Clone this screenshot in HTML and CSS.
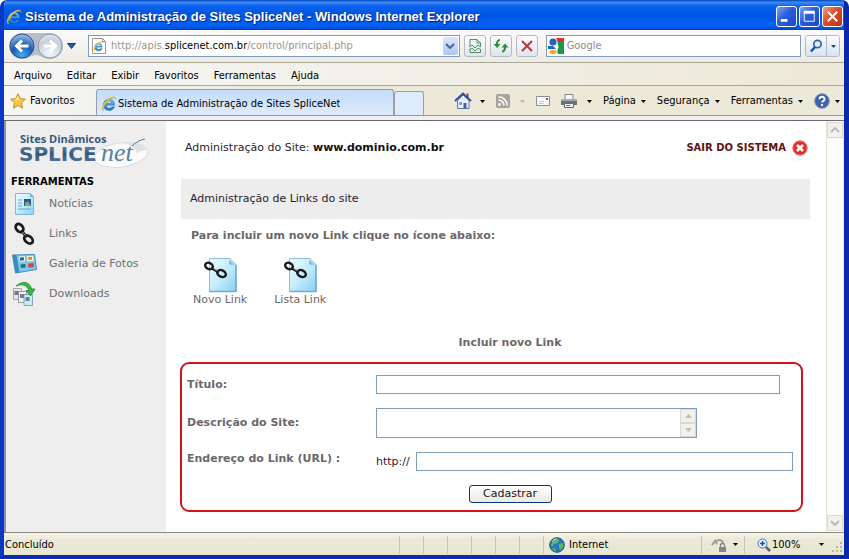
FILE: index.html
```html
<!DOCTYPE html>
<html lang="pt-BR">
<head>
<meta charset="utf-8">
<title>Sistema de Administração de Sites SpliceNet</title>
<link rel="stylesheet" href="styles.css">
</head>
<body>
<svg class="defs" aria-hidden="true">
  <defs>
    <linearGradient id="eBlue" x1="0" y1="0" x2="0" y2="1"><stop offset="0" stop-color="#6cccfa"/><stop offset="1" stop-color="#1672cc"/></linearGradient>
    <radialGradient id="ballBlue" cx=".5" cy=".9" r=".9"><stop offset="0" stop-color="#3fb0f0"/><stop offset=".5" stop-color="#1c5cb0"/><stop offset="1" stop-color="#9cc2ea"/></radialGradient>
    <radialGradient id="ballGrey" cx=".5" cy=".8" r=".9"><stop offset="0" stop-color="#f4f7fb"/><stop offset=".6" stop-color="#c6d0dc"/><stop offset="1" stop-color="#eef2f6"/></radialGradient>
    <linearGradient id="paper" x1="0" y1="0" x2="1" y2="1"><stop offset="0" stop-color="#f2fbff"/><stop offset=".5" stop-color="#c4ecfb"/><stop offset="1" stop-color="#86d2f2"/></linearGradient>
    <linearGradient id="steel" x1="0" y1="0" x2="0" y2="1"><stop offset="0" stop-color="#6f94bb"/><stop offset=".5" stop-color="#34597f"/><stop offset="1" stop-color="#5681ac"/></linearGradient>
    <symbol id="ie" viewBox="0 0 16 16">
      <path d="M13.6 9.2H5.4c.1 2 1.300 3 2.900 3 1.100 0 1.900-.5 2.400-1.400h2.800c-.8 2.300-2.700 3.700-5.300 3.700-3.400 0-5.800-2.200-5.800-5.700S4.900 3.100 8.200 3.100s5.500 2.400 5.400 6.100zM5.500 7.200h5.300c-.2-1.300-1.100-2.100-2.500-2.100s-2.500.8-2.800 2.100z" fill="url(#eBlue)" stroke="#1257a5" stroke-width=".4"/>
      <path d="M2.600 14.900C-1 13.600 2.200 6.800 7.200 3.200 11 .4 15.400-.2 14.800 3.600c.2-2.600-3-2-6.300.3C4.200 7 .9 12.600 2.600 14.900z" fill="#f3bf3d" stroke="#d9a83a" stroke-width=".5"/>
    </symbol>
    <symbol id="linkpage" viewBox="0 0 34 36">
      <path d="M6.500 1.500H27l6 6v27H6.500z" fill="url(#paper)" stroke="#8fbbe0"/>
      <path d="M6.500 34.500H33V8" fill="none" stroke="#7ba6d2" stroke-width="1.500"/>
      <path d="M26 3l6 5-6-.5z" fill="#6fc4ea"/>
      <g fill="none" stroke="#15181c" stroke-width="2.400"><ellipse cx="6" cy="9" rx="4" ry="3" transform="rotate(25 6 9)"/><ellipse cx="18.500" cy="16.500" rx="4.500" ry="3.200" transform="rotate(25 18.500 16.500)"/><path d="M8 11l8 4.500"/></g>
      <path d="M10.500 11.500l4 2.300" stroke="#9aa4ac"/>
    </symbol>
    <symbol id="down" viewBox="0 0 7 4"><path d="M0 0h7L3.500 4z"/></symbol>
    <symbol id="chev" viewBox="0 0 10 6"><path d="M1 1l4 4 4-4" fill="none" stroke="currentColor" stroke-width="2"/></symbol>
  </defs>
</svg>
<div class="window">
  <header class="titlebar">
    <svg class="i16" viewBox="0 0 16 16"><use href="#ie"/></svg>
    <h1>Sistema de Administração de Sites SpliceNet - Windows Internet Explorer</h1>
    <div class="winbtns">
      <button type="button" aria-label="Minimizar"><svg viewBox="0 0 20 20"><path d="M4 14h7" stroke="#fff" stroke-width="3"/></svg></button>
      <button type="button" aria-label="Maximizar"><svg viewBox="0 0 20 20"><path d="M4.500 5v10h10.500V5z" fill="none" stroke="#fff"/><path d="M4 5.500h11.500" stroke="#fff" stroke-width="3"/></svg></button>
      <button type="button" class="close" aria-label="Fechar"><svg viewBox="0 0 20 20"><path d="M5 5l10 10M15 5L5 15" stroke="#fff" stroke-width="2.200"/></svg></button>
    </div>
  </header>

  <div class="chrome">
    <div class="addressrow">
      <div class="nav">
        <svg class="travel" viewBox="0 0 56 28" role="img" aria-label="Voltar e avançar">
          <path d="M14 1h28a13 13 0 0 1 0 26c-7 0-9-4-14-4s-7 4-14 4A13 13 0 0 1 14 1z" fill="#b7bec9"/>
          <circle cx="14" cy="14" r="12" fill="url(#ballBlue)" stroke="#2a4f86"/>
          <circle cx="42" cy="14" r="12" fill="url(#ballGrey)" stroke="#8d99aa"/>
          <path d="M20.500 14H9M14 8.500L8.500 14l5.500 5.500" fill="none" stroke="#fff" stroke-width="3"/>
          <path d="M35.500 14H47M42 8.500l5.500 5.500-5.500 5.500" fill="none" stroke="#fff" stroke-width="3"/>
        </svg>
        <svg class="navdown" viewBox="0 0 9 6"><path d="M.5.500h8L4.500 5.500z" fill="#1d5fa0" stroke="#173d73"/></svg>
      </div>
      <div class="address">
        <svg class="i18" viewBox="0 0 18 18"><path d="M2.500 1.500h10l3 3v12h-13z" fill="#fff" stroke="#999"/><path d="M12.500 1.500v3h3" fill="none" stroke="#999"/><use href="#ie" x="3" y="4" width="11" height="11"/></svg>
        <span class="url">http://apis.<b>splicenet.com.br</b>/control/principal.php</span>
        <button type="button" class="combo" aria-label="Histórico"><svg viewBox="0 0 10 6"><use href="#chev"/></svg></button>
      </div>
      <button type="button" class="tool" aria-label="Modo de compatibilidade"><svg viewBox="0 0 18 18"><path d="M4 9V2.500h7L14.500 6v3M4 12v3.500h10.500V12" fill="none" stroke="#4a9558"/><path d="M11 2.500V6h3.500M3 10l3-2 3 3 3-3 3 2M3 13l3-2 3 3 3-3 3 2" fill="none" stroke="#4a9558"/></svg></button>
      <button type="button" class="tool" aria-label="Atualizar"><svg viewBox="0 0 18 18"><path d="M8 3C5.500 3 5 4.500 5 8M10 14.500c2.500 0 3-1.500 3-5" fill="none" stroke="#28923a" stroke-width="2.200"/><path d="M1.500 7h7L5 11zM9.500 10.500h7L13 6.500z" fill="#28923a"/></svg></button>
      <button type="button" class="tool" aria-label="Parar"><svg viewBox="0 0 18 18"><path d="M4 4l10 10M14 4L4 14" stroke="#b8363c" stroke-width="2"/></svg></button>
      <div class="searchbox">
        <svg class="i18" viewBox="0 0 18 18"><path d="M1 1h16v16H1z" fill="#f6f6f6"/><path d="M10 1h7v16h-6c-2-5 2-6 0-9z" fill="#169a46"/><path d="M9 1h8v4h-6z" fill="#db3025"/><circle cx="6" cy="5" r="3.500" fill="#2461c2"/><path d="M1 9h5l3 3H1z" fill="#2461c2"/><ellipse cx="6" cy="15" rx="3.500" ry="2" fill="#f4a81d"/></svg>
        <input type="text" placeholder="Google" aria-label="Pesquisar no Google">
      </div>
      <div class="searchbtn">
        <button type="button" aria-label="Pesquisar"><svg class="i14" viewBox="0 0 14 14"><circle cx="8.500" cy="5" r="3.700" fill="#d9edff" stroke="#2f63b5" stroke-width="1.700"/><path d="M6 8l-4 4.500" stroke="#1f4a9c" stroke-width="2.500"/></svg></button>
        <button type="button" aria-label="Opções de pesquisa"><svg class="dd blue" viewBox="0 0 7 4"><use href="#down"/></svg></button>
      </div>
    </div>

    <nav class="menubar">
      <a href="#">Arquivo</a><a href="#">Editar</a><a href="#">Exibir</a><a href="#">Favoritos</a><a href="#">Ferramentas</a><a href="#">Ajuda</a>
    </nav>

    <div class="tabrow">
      <a class="favorites" href="#"><svg class="i16" viewBox="0 0 16 16"><path d="M8 .8l2.200 4.900 5.200.5-3.900 3.600 1.100 5.300L8 12.400l-4.600 2.700 1.100-5.300L.6 6.200l5.200-.5z" fill="#f9c843" stroke="#c98a1c"/><path d="M8 3l1.300 3.700L5 7z" fill="#fff0b0"/></svg>Favoritos</a>
      <a class="tab" href="#"><svg class="i16" viewBox="0 0 16 16"><use href="#ie"/></svg><span>Sistema de Administração de Sites SpliceNet</span></a>
      <button type="button" class="newtab" aria-label="Nova guia"></button>
      <div class="commands">
        <a href="#" aria-label="Página inicial"><svg class="i18" viewBox="0 0 18 18"><path d="M12.500 1.500h2V6h-2z" fill="#a33c2c"/><path d="M3.500 8.500L9 3l6 5.500v8h-11.500z" fill="#e8effa" stroke="#5a79ac"/><path d="M1 9l8-7.500L17 9" fill="none" stroke="#2f519c" stroke-width="2"/><path d="M9.500 11h3v5.500h-3z" fill="#40629f"/><path d="M5 10h3v3H5z" fill="#7da2d6"/></svg><svg class="dd" viewBox="0 0 7 4"><use href="#down"/></svg></a>
        <a href="#" class="off" aria-label="Feeds"><svg class="i14" viewBox="0 0 14 14"><rect width="14" height="14" rx="2" fill="#a5a5a0"/><circle cx="3.500" cy="10.500" r="1.500" fill="#fff"/><path d="M2.500 6a5.500 5.500 0 0 1 5.500 5.500M2.500 2.800a8.700 8.700 0 0 1 8.700 8.700" fill="none" stroke="#fff" stroke-width="1.600"/></svg><svg class="dd" viewBox="0 0 7 4"><use href="#down"/></svg></a>
        <a href="#" aria-label="Ler email"><svg class="i14" viewBox="0 0 14 14"><path d="M.5 2.500h13v9H.5z" fill="#fafafa" stroke="#8b8d98"/><path d="M10 4h2v2h-2z" fill="#d02e3c"/><path d="M3 7.500h5M3 9.500h5" stroke="#c4c7d0"/></svg></a>
        <a href="#" aria-label="Imprimir"><svg class="i16" viewBox="0 0 16 16"><path d="M4 1.500h8V7H4z" fill="#f6f9fd" stroke="#788"/><path d="M0 6h16v6H0z" fill="#6d7178"/><path d="M0 6h16v2H0z" fill="#a6abb2"/><path d="M3.500 10.500h9v4h-9z" fill="#f4f7fa" stroke="#667"/><path d="M5 12.500h4" stroke="#2d7fd0"/></svg><svg class="dd wide" viewBox="0 0 7 4"><use href="#down"/></svg></a>
        <a href="#">Página<svg class="dd" viewBox="0 0 7 4"><use href="#down"/></svg></a>
        <a href="#">Segurança<svg class="dd" viewBox="0 0 7 4"><use href="#down"/></svg></a>
        <a href="#">Ferramentas<svg class="dd" viewBox="0 0 7 4"><use href="#down"/></svg></a>
        <a href="#" class="help" aria-label="Ajuda"><svg class="i16" viewBox="0 0 16 16"><circle cx="8" cy="8" r="7.300" fill="#3a62b0" stroke="#8893a8"/><path d="M5.500 6.200C5.500 3 10.700 3 10.600 6.200c0 1.800-2.500 1.600-2.500 3.400M8.100 11v2" fill="none" stroke="#fff" stroke-width="1.900"/></svg><svg class="dd" viewBox="0 0 7 4"><use href="#down"/></svg></a>
      </div>
    </div>
  </div>

  <div class="viewport">
    <aside class="sidebar">
      <svg class="logo" viewBox="0 -4 136 40" role="img" aria-label="Sites Dinâmicos SpliceNet">
        <ellipse cx="106" cy="22" rx="27" ry="12" transform="rotate(-8 106 22)" fill="#fbfbfb" stroke="#dcdcdc"/>
        <path d="M108 10c9-2 20 1 24 7-3 1-8 0-10 4-1-6-7-10-14-11z" fill="#dde1e6"/>
        <text class="logo-top" x="5" y="10">Sites Dinâmicos</text>
        <text class="logo-main" x="4" y="28">SPLICE</text>
        <text class="logo-net" x="86" y="28">net</text>
        <path d="M117 13c4-4 8-6 13-7" fill="none" stroke="#56809f"/>
      </svg>
      <h2>FERRAMENTAS</h2>
      <ul>
        <li><a href="#"><svg class="i26" viewBox="0 0 26 26"><path d="M4.500 2.500h15l3 3v18h-18z" fill="url(#paper)" stroke="#84b6dc"/><path d="M19 2.500l4 4-4-.5z" fill="#5cbbe8"/><path d="M13 8h7v7h-7z" fill="#2d568c"/><path d="M14 12l3-2 3 5h-6z" fill="#80a860"/><path d="M7 9h4M7 12h4M7 15h4M7 18h13" stroke="#6aa4d8"/></svg>Notícias</a></li>
        <li><a href="#"><svg class="i26" viewBox="0 0 26 26"><g fill="none" stroke="#1a1a1a" stroke-width="2.800"><ellipse cx="8.500" cy="7" rx="4.500" ry="3.300" transform="rotate(50 8.500 7)"/><ellipse cx="17.500" cy="18.500" rx="4.800" ry="3.300" transform="rotate(40 17.500 18.500)"/><path d="M10 9.500l6 6.500"/></g><path d="M11.500 11l3 3.500" stroke="#aaa"/></svg>Links</a></li>
        <li><a href="#"><svg class="i26" viewBox="0 0 26 26"><path d="M1.500 4L23.500 3.500l2 15L4.500 22z" fill="#7cc8ee" stroke="#468db8"/><path d="M1.500 4h4l3 17.500-4 .5z" fill="#3f8cba"/><path d="M8 5.500l6-.3v5l-5.300.6zM16 5l6-.3.5 5-6 .5z" fill="#fff8d8"/><path d="M9 6.500l4-.3v3l-4 .5zM9.500 13.500l5-.5v3.500l-4.500.6z" fill="#236a88"/><path d="M17 6l4-.3v3l-3.500.3z" fill="#c29b24"/><path d="M17 12.500l5.500-.6.500 4-5.500.8z" fill="#cf4a38"/></svg>Galeria de Fotos</a></li>
        <li><a href="#"><svg class="i26" viewBox="0 0 26 26"><path d="M2.500 7.500h8v11h-8z" fill="#e3e5e8" stroke="#a2a7ae"/><path d="M7.500 10.500h8v11h-8z" fill="#eff1f3" stroke="#9298a0"/><path d="M13 13.500h8.500v11H13z" fill="#c6eef8" stroke="#7fa6bc"/><path d="M3.500 10h4v4h-4zM9 13h4v4H9zM14.500 16h4v4h-4z" fill="#727a82"/><path d="M5 5C12-1 19 1 20.500 8H24l-4.500 7L15 9.500h3C16 4 11 2.500 5 5z" fill="#3cb549" stroke="#218a30" stroke-width=".8"/></svg>Downloads</a></li>
      </ul>
    </aside>

    <main class="page">
      <div class="sitebar">
        <p>Administração do Site: <strong>www.dominio.com.br</strong></p>
        <a class="logout" href="#">SAIR DO SISTEMA<svg class="i16" viewBox="0 0 16 16"><circle cx="8" cy="8" r="7.300" fill="#d9322c" stroke="#e98a84"/><path d="M5 5l6 6M11 5l-6 6" stroke="#fff" stroke-width="2.600"/></svg></a>
      </div>
      <h2 class="band">Administração de Links do site</h2>
      <p class="hint">Para incluir um novo Link clique no ícone abaixo:</p>
      <div class="shortcuts">
        <a href="#"><svg viewBox="0 0 34 36"><use href="#linkpage"/></svg>Novo Link</a>
        <a href="#"><svg viewBox="0 0 34 36"><use href="#linkpage"/></svg>Lista Link</a>
      </div>
      <h3>Incluir novo Link</h3>
      <form class="linkform">
        <label for="titulo">Título:</label>
        <div><input id="titulo" class="title-input" type="text"></div>
        <label for="descricao">Descrição do Site:</label>
        <div class="area"><textarea id="descricao" rows="2"></textarea>
          <span class="spin"><i><svg viewBox="0 0 7 4"><path d="M0 4h7L3.500 0z"/></svg></i><i><svg viewBox="0 0 7 4"><use href="#down"/></svg></i></span></div>
        <label for="endereco" class="top">Endereço do Link (URL) :</label>
        <div class="urlfield"><span>http://</span><input id="endereco" type="text"></div>
        <button type="button" class="submit">Cadastrar</button>
      </form>
    </main>
    <div class="scrollbar"><i><svg class="flip" viewBox="0 0 10 6"><use href="#chev"/></svg></i><i><svg viewBox="0 0 10 6"><use href="#chev"/></svg></i></div>
  </div>

  <footer class="status">
    <span class="msg">Concluído</span>
    <span class="cell"></span><span class="cell"></span><span class="cell"></span><span class="cell"></span><span class="cell"></span><span class="cell"></span>
    <span class="zone"><svg class="i16" viewBox="0 0 16 16"><circle cx="8" cy="8" r="7.300" fill="#2a78b8" stroke="#1f5486"/><path d="M5 2l4-.8 1 3-2 2-3 .8-2 3-1-2zM10 7l4-1 .5 3-2.500 4-2-2zM3 11l3 .5 1 3-2-.5z" fill="#5cba64"/><path d="M3 5c1-2 3-3 4-3" stroke="#bfe4f4" fill="none"/></svg>Internet</span>
    <span class="protect"><svg class="i16" viewBox="0 0 16 16"><path d="M1 8l3-4 2 3M4 6c2-4 7-4 8 0" fill="none" stroke="#9c9c98" stroke-width="2"/><path d="M8 10h7v5H8z" fill="#85858a"/><path d="M9.500 10V8c0-2 4-2 4 0v2" fill="none" stroke="#85858a" stroke-width="1.300"/></svg><svg class="dd wide" viewBox="0 0 7 4"><use href="#down"/></svg></span>
    <span class="zoom"><svg class="i14" viewBox="0 0 14 14"><circle cx="5.500" cy="5.500" r="4.500" fill="#e4f3ff" stroke="#3c70b4"/><path d="M3 5.500h5M5.500 3v5" stroke="#1c4fa0" stroke-width="1.500"/><path d="M9 9l4 4" stroke="#5f6670" stroke-width="2.500"/></svg><span>100%</span><svg class="dd" viewBox="0 0 7 4"><use href="#down"/></svg></span>
    <svg class="grip" viewBox="0 0 12 12"><path d="M8 0h2v2H8zM4 4h2v2H4zM8 4h2v2H8zM0 8h2v2H0zM4 8h2v2H4zM8 8h2v2H8z" fill="#b8b5a4"/></svg>
  </footer>
</div>
</body>
</html>
```

FILE: styles.css
```css
* { box-sizing: border-box; }
html, body { height: 100%; margin: 0; }
body { background: #fff; font: 11px/14px "DejaVu Sans", Verdana, sans-serif; color: #222; overflow: hidden; }
h1, h2, h3, p, ul { margin: 0; padding: 0; }
ul { list-style: none; }
a { color: inherit; text-decoration: none; }
button, input, textarea { font: inherit; margin: 0; padding: 0; border-radius: 0; }
svg { display: block; flex: none; }
.defs { position: absolute; width: 0; height: 0; }
.i14 { width: 14px; height: 14px; }
.i16 { width: 16px; height: 16px; }
.i18 { width: 18px; height: 18px; }
.i26 { width: 26px; height: 26px; }
.dd { width: 5px; height: 3px; fill: #000; margin-left: 5px; }
.dd.wide { margin-left: 10px; }
.dd.blue { fill: #24457e; margin: 0; }

.window { display: flex; flex-direction: column; height: 100vh; border: solid #0a37c4; border-width: 0 5px 4px 4px; border-right-color: #0a28a8; border-bottom-color: #0a2cae; border-radius: 7px 7px 0 0; overflow: hidden; background: #ece9d8; }

.titlebar { flex: none; display: flex; align-items: center; gap: 3px; height: 30px; margin: 0 -5px 0 -4px; padding: 3px 6px 0; background: linear-gradient(#0a43c0, #3b8cf8 8%, #0a62ee 20%, #0054e3 50%, #0061f4 80%, #0058ea 92%, #0040c0); }
.titlebar h1 { flex: 1; font: bold 13px/18px "Liberation Sans", "Trebuchet MS", sans-serif; color: #fff; text-shadow: 1px 1px 1px #06216e; white-space: nowrap; }
.winbtns { display: flex; gap: 2px; }
.winbtns button { width: 21px; height: 21px; border: 1px solid #fff; border-radius: 3px; background: linear-gradient(135deg, #7ea4f0, #2a5cdc 45%, #1c48c0); }
.winbtns .close { background: linear-gradient(135deg, #f0a088, #dc4c28 45%, #bc3010); }
.winbtns svg { width: 19px; height: 19px; }

.chrome { flex: none; font: 11px/14px "DejaVu Sans Condensed", Tahoma, sans-serif; color: #000; border-bottom: 1px solid #6e6a6a; background: #f0eff0; padding-bottom: 4px; }
.addressrow { display: flex; align-items: center; gap: 4px; height: 32px; padding: 0 4px; background: linear-gradient(#fbfbfa, #ecebe4); }
.nav { display: flex; align-items: center; gap: 3px; width: 76px; }
.travel { width: 56px; height: 28px; }
.navdown { width: 9px; height: 6px; }
.address, .searchbox { display: flex; align-items: center; height: 22px; border: 1px solid #7f9db9; background: #fff; }
.address { flex: 371; gap: 3px; padding: 1px 1px 1px 0; }
.url { flex: 1; color: #9a968c; white-space: nowrap; }
.url b { font-weight: normal; color: #000; }
.combo { width: 15px; height: 18px; border: 0; border-radius: 2px; background: linear-gradient(#dbe7fd, #b0c6f4); color: #4a6690; display: flex; align-items: center; justify-content: center; }
.combo svg { width: 10px; height: 6px; }
.address .i18 { margin-left: 1px; }
.tool { width: 22px; height: 22px; border: 1px solid #b4bac4; border-radius: 3px; background: linear-gradient(#fdfdfe, #dfe5ee); }
.tool svg { width: 18px; height: 18px; margin: auto; }
.searchbox { flex: 255; margin-left: 4px; gap: 2px; }
.searchbox input { flex: 1; min-width: 0; border: 0; outline: 0; background: none; }
.searchbox input::placeholder { color: #8c8c8c; opacity: 1; }
.searchbtn { display: flex; height: 22px; border: 1px solid #b4bac4; border-radius: 3px; overflow: hidden; }
.searchbtn button { width: 20px; border: 0; background: linear-gradient(#fdfdfe, #d6e2f4); display: flex; align-items: center; justify-content: center; }
.searchbtn button + button { width: 13px; border-left: 1px solid #b4bac4; }

.menubar { display: flex; align-items: center; gap: 15px; height: 24px; padding: 3px 10px 0; border-top: 1px solid #aba794; border-bottom: 1px solid #aba794; background: linear-gradient(90deg, #f6f6f5, #ece9d8); }

.tabrow { display: flex; align-items: flex-end; height: 30px; border-bottom: 1px solid #99988f; background: linear-gradient(90deg, #f6f6f5, #ece9d8 40%); }
.favorites { display: flex; align-items: center; gap: 4px; width: 92px; height: 27px; padding: 0 0 1px 6px; }
.tab { display: flex; align-items: center; gap: 1px; flex: 0 1 298px; min-width: 0; height: 26px; padding: 2px 4px 0; border: 1px solid #94a0b2; border-bottom: 0; border-radius: 3px 3px 0 0; background: linear-gradient(#c3dbfa, #dfebfb); white-space: nowrap; }
.tab span { overflow: hidden; }
.newtab { width: 30px; height: 24px; border: 1px solid #94a0b2; border-bottom: 0; border-radius: 3px 3px 0 0; background: #deebfc; }
.commands { flex: 1; display: flex; align-items: center; justify-content: space-between; height: 28px; padding: 0 4px 0 30px; white-space: nowrap; }
.commands a { display: flex; align-items: center; }
.commands .off .dd { fill: #bbb8aa; margin-left: 10px; }
.commands a:first-child .dd { margin-left: 8px; }

.viewport { flex: 1; min-height: 0; display: flex; border-left: 2px solid #8a92a8; background: #fff; }
.sidebar { flex: none; width: 160px; background: #eee; padding: 8px 0 0 5px; }
.logo { width: 136px; height: 40px; margin-left: 4px; }
.logo-top { font: bold 11px "Open Sans", sans-serif; fill: #36597f; }
.logo-main { font: bold 20px "DejaVu Sans", sans-serif; fill: url(#steel); }
.logo-net { font: italic 26px "Liberation Serif", serif; fill: #56809f; }
.sidebar h2 { font: bold 10px/14px "DejaVu Sans", sans-serif; color: #000; margin-top: 6px; }
.sidebar li a { display: flex; align-items: center; gap: 12px; height: 30px; color: #6e6e6e; }

.page { flex: 1; min-width: 0; padding: 16px 16px 0 15px; color: #6b676b; }
.sitebar { display: flex; justify-content: space-between; align-items: center; height: 22px; padding: 0 2px 0 4px; color: #2c1a2c; }
.sitebar strong { color: #111; }
.logout { display: flex; align-items: center; gap: 6px; font-size: 10px; font-weight: bold; color: #5c1414; }
.band { margin-top: 20px; padding: 13px 9px; font: 11px/14px "DejaVu Sans", sans-serif; color: #2c1a2c; background: #ededed; }
.hint { margin: 10px 0 0 10px; font-weight: bold; }
.shortcuts { display: flex; gap: 27px; margin: 14px 0 0 12px; }
.shortcuts a { display: flex; flex-direction: column; align-items: center; }
.shortcuts svg { width: 34px; height: 36px; }
.page h3 { margin-top: 29px; font: bold 11px/14px "DejaVu Sans", sans-serif; text-align: center; padding-left: 29px; }
.linkform { display: grid; grid-template-columns: 189px 1fr; align-items: center; row-gap: 14px; margin: 12px 7px 0 -1px; padding: 11px 8px 7px 5px; border: 2px solid #d5121a; border-radius: 9px; }
.linkform label { font-weight: bold; }
.linkform .top { align-self: start; }
.linkform input, .linkform textarea { display: block; border: 1px solid #7f9db9; background: #fff; }
.linkform input { height: 19px; }
.title-input { width: 97%; }
.area { position: relative; width: 77%; }
.linkform textarea { width: 100%; height: 30px; resize: none; overflow: hidden; }
.spin { position: absolute; top: 1px; right: 1px; bottom: 1px; width: 16px; display: flex; flex-direction: column; }
.spin i, .scrollbar i { display: flex; align-items: center; justify-content: center; border: 1px solid #dcdad0; background: #f2f1eb; }
.spin i { flex: 1; }
.spin svg { width: 7px; height: 4px; fill: #c2c0b4; }
.urlfield { display: flex; align-items: center; gap: 6px; color: #2c1a2c; }
.urlfield input { flex: 1; min-width: 0; }
.submit { grid-column: 1 / -1; justify-self: center; width: 83px; height: 18px; margin-left: 40px; border: 1px solid #003c74; border-radius: 3px; background: linear-gradient(#fff, #ece9e0); color: #1c1420; }
.scrollbar { flex: none; width: 18px; display: flex; flex-direction: column; justify-content: space-between; background: #fcfcf8; border: solid #e6e5dc; border-width: 0 1px; padding: 1px 0; color: #bdbbb0; }
.scrollbar i { height: 16px; }
.scrollbar svg { width: 10px; height: 6px; }
.flip { transform: rotate(180deg); }

.status { flex: none; display: flex; align-items: center; height: 23px; padding-top: 1px; border-top: 1px solid #8c897c; background: linear-gradient(#f6f4ea, #ece9d8 30%, #e8e5d2); font: 11px/14px "DejaVu Sans Condensed", Tahoma, sans-serif; color: #000; }
.msg { flex: 1; padding-left: 1px; }
.cell { width: 24px; height: 18px; border-left: 1px solid #c8c5b4; }
.zone, .protect, .zoom { display: flex; align-items: center; height: 18px; border-left: 1px solid #c8c5b4; }
.zone { width: 158px; gap: 4px; padding-left: 5px; }
.protect { width: 43px; padding-left: 9px; }
.protect .dd { margin-left: 6px; }
.zoom { width: 80px; padding-left: 12px; gap: 1px; }
.zoom .dd { margin-left: auto; }
.grip { width: 12px; height: 12px; margin: 6px 0 0 8px; }
```
